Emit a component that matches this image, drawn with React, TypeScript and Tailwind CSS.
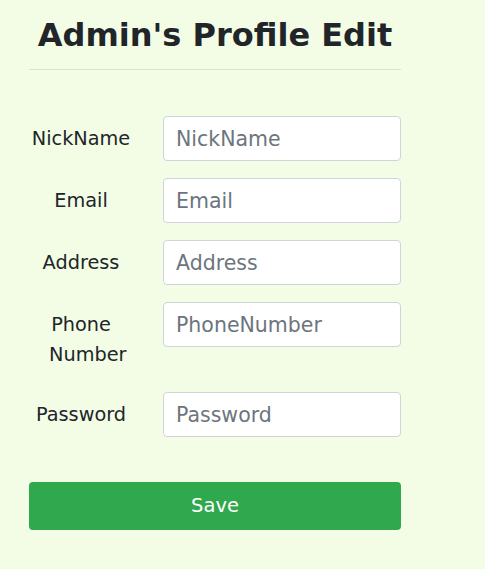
import React from "react";

const fields = [
  { label: "NickName", placeholder: "NickName" },
  { label: "Email", placeholder: "Email" },
  { label: "Address", placeholder: "Address" },
  { label: "Phone Number", placeholder: "PhoneNumber", wrap: true },
  { label: "Password", placeholder: "Password" },
];

export default function App() {
  return (
    <div
      className="min-h-[569px] w-full bg-[#f3fde6] text-[#212529]"
      style={{ fontFamily: '"DejaVu Sans", Verdana, sans-serif' }}
    >
      <div className="ml-[29px] w-[372px] pt-[16px]">
        <h2 className="text-center text-[32px] font-bold leading-[38px] text-[#212529]">
          Admin's Profile Edit
        </h2>
        <hr className="mt-[15px] border-0 border-t border-[#dadfd8]" />
        <form className="mt-[46px] flex flex-col gap-[17px]">
          {fields.map((f) => (
            <div key={f.label} className="flex items-start">
              <label
                className={`w-[104px] pt-[8px] pb-[5px] text-center text-[19.3px] leading-[30px] ${f.wrap ? "px-[20px]" : ""}`}
              >
                {f.label}
              </label>
              <input
                type="text"
                placeholder={f.placeholder}
                className="ml-[30px] h-[45px] w-[238px] rounded-[4px] border border-[#ced4da] bg-white px-[12px] text-[20.5px] text-[#495057] placeholder:text-[#6c757d] outline-none"
              />
            </div>
          ))}
          <button
            type="button"
            className="mt-[28px] h-[48px] w-[372px] rounded-[4px] bg-[#30a84d] text-[19.5px] text-white"
          >
            Save
          </button>
        </form>
      </div>
    </div>
  );
}
